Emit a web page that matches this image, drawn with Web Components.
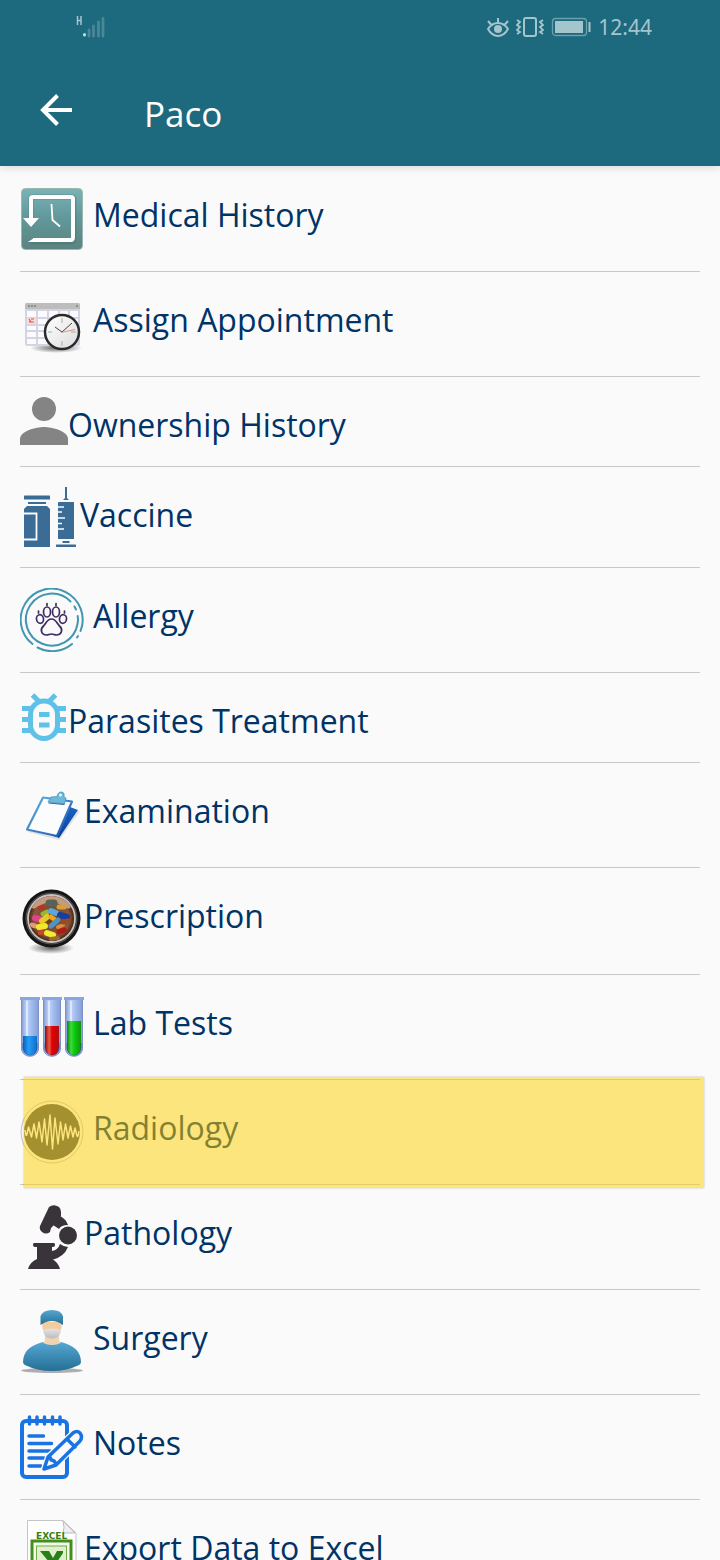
<!DOCTYPE html>
<html lang="en">
<head>
  <meta charset="UTF-8">
  <meta name="viewport" content="width=device-width, initial-scale=1.0">
  <title>Paco</title>
  <style>
    body {
      margin: 0;
      font-family: "Open Sans", "Noto Sans", sans-serif;
      background: #fafafa;
      color: #003366;
    }
  </style>
</head>
<body>

<patient-screen>
  <status-bar slot="top" time="12:44"></status-bar>
  <app-bar slot="top">Paco</app-bar>

  <menu-row spaced>
    <svg slot="icon" width="64" height="64" viewBox="0 0 64 64">
      <defs>
        <linearGradient id="teal" x2="0" y2="1"><stop stop-color="#7ab3b6"/><stop offset=".45" stop-color="#62999c"/><stop offset="1" stop-color="#5a8480"/></linearGradient>
      </defs>
      <rect x="1.500" y="1.500" width="61" height="61" rx="4" fill="url(#teal)" stroke="#9fb5b4"/>
      <path d="M11 33V12q0-2 2-2h39q2 0 2 2v39q0 4-2 4H10" fill="none" stroke="#44706f" stroke-width="5" opacity=".4"/>
      <path d="M11 33V12q0-2 2-2h38q2 0 2 2v38q0 3-2 3H13" fill="none" stroke="#fff" stroke-width="4"/>
      <path d="M3 31h16l-8 9zM14 51l-6 4h8z" fill="#fff"/>
      <path d="M31.500 17l1 16 7.500 6.500" fill="none" stroke="#fff" stroke-width="1.800"/>
    </svg>
    Medical History
  </menu-row>

  <menu-row spaced>
    <svg slot="icon" width="64" height="64" viewBox="0 0 64 64">
      <defs>
        <radialGradient id="soft"><stop stop-color="#000" stop-opacity=".6"/><stop offset="1" stop-color="#000" stop-opacity="0"/></radialGradient>
        <linearGradient id="dial" x2="1" y2="1"><stop stop-color="#fff"/><stop offset="1" stop-color="#dcdcdc"/></linearGradient>
      </defs>
      <ellipse cx="36" cy="56" rx="26" ry="5" fill="url(#soft)"/>
      <rect x="5" y="11" width="55" height="43" rx="2" fill="#d3d5e2"/>
      <path d="M5 17v-4q0-2 2-2h51q2 0 2 2v4z" fill="#bdbdbd"/>
      <path d="M8 14h8M56 14h2" stroke="#8f8f8f" stroke-width="2" stroke-dasharray="2 1"/>
      <path d="M7 19h9v6H7zM18 19h9v6h-9zM29 19h9v6h-9zM40 19h8v6h-8zM50 19h8v6h-8zM7 27h9v5H7zM18 27h9v5h-9zM29 27h9v5h-9zM50 27h8v5h-8zM7 34h9v4H7zM18 34h9v4h-9zM7 40h9v5H7zM18 40h9v5h-9zM7 47h9v5H7zM18 47h9v5h-9z" fill="#fbfbff"/>
      <path d="M7 26h9v6H7z" fill="#fbdada"/>
      <path d="M9 27l2 3m0-3h3m-5 3h5" stroke="#ec4b45" stroke-width="1.200"/>
      <circle cx="42" cy="40" r="17" fill="url(#dial)" stroke="#2b2b2b" stroke-width="2.500"/>
      <path d="M42 26v5M42 49v5M28 40h4M51 40h5" stroke="#aaa"/>
      <path d="M42 40l10-9M42 40l-7-5" stroke="#333" stroke-width=".9"/>
      <path d="M41 40.500l14-3" stroke="#df8a80" stroke-width=".9"/>
    </svg>
    Assign Appointment
  </menu-row>

  <menu-row>
    <svg slot="icon" width="48" height="48" viewBox="0 0 48 48" fill="#848484">
      <circle cx="24" cy="12" r="12"/>
      <path d="M0 48v-6c0-8 16-12 24-12s24 4 24 12v6z"/>
    </svg>
    Ownership History
  </menu-row>

  <menu-row>
    <svg slot="icon" width="60" height="60" viewBox="0 0 60 60">
      <g fill="#3b6c96">
        <rect x="4" y="8.500" width="26" height="4" rx=".5"/>
        <rect x="8" y="15" width="18" height="2"/>
        <path d="M4 60V22l3-3h20l3 3v38z"/>
        <path d="M45 0h2v11l2 2h-6l2-2z"/>
        <rect x="38" y="15" width="16" height="37" rx=".5"/>
        <rect x="42.500" y="54" width="7" height="2"/>
        <rect x="36" y="57.500" width="20" height="2.500" rx=".5"/>
      </g>
      <path d="M4 26.500h12.500v26H4" fill="none" stroke="#fafafa" stroke-width="1.800"/>
      <path d="M38 20h6M38 25h4M38 31h7M38 36.500h4M38 42h6" stroke="#fafafa" stroke-width="1.500"/>
    </svg>
    Vaccine
  </menu-row>

  <menu-row spaced>
    <svg slot="icon" width="64" height="64" viewBox="0 0 64 64" fill="none" stroke-linecap="round">
      <g stroke="#4296b4" stroke-width="2">
        <path d="M60.500 43A31 31 0 1 0 12.500 56M17.500 59.500A31 31 0 0 0 52 56M58 48l-1 1.500"/>
        <path d="M50.500 13.500A26 26 0 1 0 57.500 36M57.500 36q1-4 .2-8M54.500 18.500l1.500 3"/>
      </g>
      <g stroke="#3d2c63" stroke-width="1.700">
        <ellipse cx="20" cy="31" rx="3.500" ry="4.300" transform="rotate(-10 20 31)"/>
        <ellipse cx="27" cy="24" rx="3.500" ry="5"/>
        <ellipse cx="36" cy="24" rx="3.500" ry="5"/>
        <ellipse cx="43" cy="31" rx="3.500" ry="4.300" transform="rotate(10 43 31)"/>
        <path d="M18.500 23v2M27 15.500v2M36 15.500v2M44.500 23v2"/>
        <path d="M31.500 31c5 0 5.500 5 8 7 4 3.500 2 9-3 9-2 0-3-1-5-1s-3 1-5 1c-5 0-7-5.500-3-9 2.500-2 3-7 8-7z"/>
      </g>
    </svg>
    Allergy
  </menu-row>

  <menu-row>
    <svg slot="icon" width="48" height="48" viewBox="0 0 48 48" fill="none" stroke="#5dc1e8" stroke-width="5">
      <rect x="10.500" y="8" width="27" height="37.500" rx="13.500"/>
      <path d="M2 15.500h10M2 26.500h8M2 37.500h10M36 15.500h10M38 26.500h8M36 37.500h10M19 21.500h10.500M19 32h10.500M12.500 2l6.500 6.500M35.500 2L29 8.500"/>
    </svg>
    Parasites Treatment
  </menu-row>

  <menu-row>
    <svg slot="icon" width="64" height="64" viewBox="0 0 64 64">
      <defs>
        <linearGradient id="edge" x2="1" y2="1"><stop stop-color="#5fb6dc"/><stop offset="1" stop-color="#1d4fae"/></linearGradient>
        <linearGradient id="sheet" x2="0" y2="1"><stop stop-color="#1a62c4"/><stop offset="1" stop-color="#0a3f9c"/></linearGradient>
      </defs>
      <path d="M8 48l31 8 20-28" fill="none" stroke="#e2e2e2" stroke-width="2"/>
      <path d="M50 24l8 3-19 28-6-2z" fill="url(#sheet)"/>
      <path d="M23 14.500l29 4-15 34.500-30-6.500z" fill="#fbfcfe" stroke="url(#edge)" stroke-width="2.200" stroke-linejoin="round"/>
      <path d="M28 19l3-5 6-.500q1-5 5-4.500 3 .5 2 5l2 1-1.500 6z" fill="#6db9da" stroke="#3b8dbd" stroke-width=".7"/>
      <circle cx="40.500" cy="12" r="1.500" fill="#e4f4fb"/>
      <path d="M28.500 20l16 1.500" stroke="#246da5"/>
    </svg>
    Examination
  </menu-row>

  <menu-row>
    <svg slot="icon" width="64" height="66" viewBox="0 0 64 66">
      <defs>
        <radialGradient id="jar"><stop stop-color="#6b3518"/><stop offset=".75" stop-color="#8d5a38"/><stop offset="1" stop-color="#3c1d12"/></radialGradient>
        <clipPath id="lens"><circle cx="31.500" cy="30.500" r="22.500"/></clipPath>
      </defs>
      <ellipse cx="31" cy="60" rx="23" ry="6" fill="url(#soft)"/>
      <circle cx="31.500" cy="30.500" r="29" fill="#161616"/>
      <circle cx="31.500" cy="30.500" r="25.500" fill="#333" stroke="#777" stroke-width=".6"/>
      <circle cx="31.500" cy="30.500" r="23.500" fill="url(#jar)" stroke="#c9c3bf" stroke-width="1.800"/>
      <g clip-path="url(#lens)" stroke-linecap="round" fill="none">
        <path d="M14 17q17-12 34 0" stroke="#c49a80" stroke-width="7"/>
        <path d="M29 15h5" stroke="#55635a" stroke-width="7"/>
        <path d="M19 20l4-1" stroke="#b73328" stroke-width="4"/>
        <path d="M39 19h5" stroke="#d0a23e" stroke-width="5"/>
        <path d="M23 26l4-2" stroke="#93b939" stroke-width="5"/>
        <path d="M31 23l5 2" stroke="#5da5dc" stroke-width="6"/>
        <path d="M40 27l7 2" stroke="#173d9d" stroke-width="6"/>
        <path d="M15 30l5 1" stroke="#e2418d" stroke-width="6"/>
        <path d="M22 33l5-4" stroke="#e7c928" stroke-width="6"/>
        <path d="M31 29l3 2" stroke="#e6a61d" stroke-width="5"/>
        <path d="M31 38l7-6" stroke="#4d93c5" stroke-width="5"/>
        <path d="M12 37l3 1" stroke="#e09a76" stroke-width="5"/>
        <path d="M19 39l6-1" stroke="#f2e628" stroke-width="6"/>
        <path d="M38 39l5-2" stroke="#dc8b40" stroke-width="4"/>
        <path d="M43 34l5-1" stroke="#9b4a26" stroke-width="5"/>
        <path d="M20 45l2-1" stroke="#d9402b" stroke-width="4"/>
        <path d="M27 45l6 2" stroke="#f5ea2e" stroke-width="6"/>
        <path d="M39 44l5-2" stroke="#b51716" stroke-width="5"/>
        <path d="M31 51l7-1" stroke="#9c6b39" stroke-width="4"/>
      </g>
    </svg>
    Prescription
  </menu-row>

  <menu-row spaced>
    <svg slot="icon" width="64" height="64" viewBox="0 0 64 64">
      <defs>
        <linearGradient id="glass"><stop stop-color="#829bd3"/><stop offset=".3" stop-color="#c3d5f7"/><stop offset=".6" stop-color="#a0bbee"/><stop offset="1" stop-color="#869dd4"/></linearGradient>
        <linearGradient id="blue"><stop stop-color="#0763b8"/><stop offset=".4" stop-color="#249cf4"/><stop offset="1" stop-color="#0c70cd"/></linearGradient>
        <linearGradient id="red"><stop stop-color="#940808"/><stop offset=".3" stop-color="#e85b4a"/><stop offset=".5" stop-color="#e40000"/><stop offset="1" stop-color="#aa1010"/></linearGradient>
        <linearGradient id="green"><stop stop-color="#078c09"/><stop offset=".3" stop-color="#40da3e"/><stop offset=".5" stop-color="#0bd00b"/><stop offset="1" stop-color="#129312"/></linearGradient>
        <g id="tube">
          <path d="M1.500 4v49c0 11 17 11 17 0V4z" fill="url(#glass)" stroke="#7d91c7"/>
          <path d="M0 2h20v3H0z" fill="#8ba6df"/>
          <path d="M7 6v46" stroke="#dce8ff" stroke-width="2"/>
        </g>
      </defs>
      <use href="#tube"/>
      <use href="#tube" x="22"/>
      <use href="#tube" x="44"/>
      <path d="M3 41h14v11c0 11-14 11-14 0z" fill="url(#blue)"/>
      <path d="M25 31h14v21c0 11-14 11-14 0z" fill="url(#red)"/>
      <path d="M47 26h14v26c0 11-14 11-14 0z" fill="url(#green)"/>
      <g fill="none" stroke="#263b82" opacity=".55">
        <path d="M3 48v4c0 11 14 11 14 0v-4M25 48v4c0 11 14 11 14 0v-4M47 48v4c0 11 14 11 14 0v-4"/>
      </g>
    </svg>
    Lab Tests
  </menu-row>

  <menu-row spaced highlighted>
    <svg slot="icon" width="64" height="64" viewBox="0 0 64 64" fill="none">
      <circle cx="32" cy="32" r="31" stroke="#c3c3c8"/>
      <circle cx="32" cy="32" r="28" fill="#48505f"/>
      <path d="M5 30q1 8 2 4l1.500-7 3 10 2.500-13 2.500 14L19 22l3 20 2.500-23 2.500 26 3-30 2.500 34L35 18l3 26 2.500-22 2.500 18 2.500-16 2.500 14 2.500-12 2.500 11 2-9 2 8q1 2 2-5" stroke="#fafafa" stroke-width="1.500" stroke-linejoin="round"/>
    </svg>
    Radiology
  </menu-row>

  <menu-row>
    <svg slot="icon" width="64" height="64" viewBox="0 0 64 64" fill="#39343a">
      <path d="M29 2q4-3 8-1l2 1q2 2 2 5v4l-7 9-3 3-1 4q-4 3-8 0-3-2-2-6z"/>
      <path d="M40 11q6 3 8 9-7 0-9 4l-6-4 4-7z"/>
      <circle cx="48" cy="30.500" r="9"/>
      <path d="M40 39q4 3 8 3-4 10-16 13v-9q6-1 8-7z"/>
      <path d="M14 38h20q1 0 1 2t-2 2h-1v12q6 3 8 10H8q2-7 9-10V42h-2q-2 0-2-2t1-2z"/>
    </svg>
    Pathology
  </menu-row>

  <menu-row spaced>
    <svg slot="icon" width="64" height="64" viewBox="0 0 64 64">
      <defs>
        <linearGradient id="scrubs" x2="0" y2="1"><stop stop-color="#55a7d3"/><stop offset="1" stop-color="#246f95"/></linearGradient>
        <linearGradient id="mask" x2="0" y2="1"><stop stop-color="#e4e4e4"/><stop offset="1" stop-color="#bcbcbc"/></linearGradient>
      </defs>
      <ellipse cx="32" cy="60.500" rx="31" ry="2.500" fill="#8d8d8d" opacity=".7"/>
      <path d="M23 32Q3 37 3 52q0 2 2 3 12 6 27 6t27-6q2-1 2-3 0-15-20-20-9 5-18 0z" fill="url(#scrubs)"/>
      <path d="M25 25h14v4q0 3 2 4-9 4-18 0 2-1 2-4z" fill="#f0d4b2"/>
      <path d="M22 12h20q0 9-4 13-6 4-12 0-4-4-4-13z" fill="#f3cda0"/>
      <path d="M23 20q9-3 18 0-1 7-6 8-3 1-6 0-5-1-6-8z" fill="url(#mask)"/>
      <path d="M20.500 15V6Q23 0 32 0t11 6v9q-11-8-22.500 0z" fill="url(#scrubs)"/>
    </svg>
    Surgery
  </menu-row>

  <menu-row spaced>
    <svg slot="icon" width="64" height="64" viewBox="0 0 64 64" fill="none" stroke="#1a73e2" stroke-width="4" stroke-linecap="round" stroke-linejoin="round">
      <rect x="2" y="6" width="45" height="56" rx="4"/>
      <path d="M9.500 2v7M17 2v7M24.500 2v7M32.500 2v7M40 2v7" stroke-width="3.500"/>
      <path d="M9 21h14.500M9 28.500h22.500M9 36h21M9 43h15M9 51h12" stroke-width="3.500"/>
      <path d="M24 54l4-12 25-24q4-3 7 0 3 4 0 8L36 50z" fill="#fafafa" stroke="#fafafa" stroke-width="6"/>
      <path d="M24 54l4-12 25-24q4-3 7 0 3 4 0 8L36 50zM28 42q3 0 3 3 4 0 5 5M47 24l8 8" fill="#fafafa" stroke-width="3.500"/>
      <path d="M23 55l2-6 4 4z" fill="#1a73e2" stroke="none"/>
    </svg>
    Notes
  </menu-row>

  <menu-row>
    <svg slot="icon" width="64" height="64" viewBox="0 0 64 64">
      <path d="M7.500.5H43L56 13v50.500H7.500z" fill="#fff" stroke="#c4c4c4"/>
      <path d="M43 1q2 7 0 12h12z" fill="#eee" stroke="#bbb"/>
      <text x="16" y="19" font-family="DejaVu Sans, sans-serif" font-size="9" font-weight="bold" fill="#39820f">EXCEL</text>
      <rect x="12" y="21" width="39" height="40" fill="#f3f9ea" stroke="#448e20" stroke-width="3"/>
      <rect x="16.500" y="26" width="30" height="31" fill="#e0f0cb" stroke="#6fab4a"/>
      <path d="M20 31h9l4 7 4-7h6v2L33 48l-2 6h-9l7-12z" fill="#28801b"/>
    </svg>
    Export Data to Excel
  </menu-row>
</patient-screen>

<script>
  // Attach an open shadow root filled with the given markup
  function render(host, html) {
    const template = document.createElement("template");
    template.innerHTML = html;
    host.attachShadow({ mode: "open" }).appendChild(template.content.cloneNode(true));
  }

  // Screen shell: fixed bars on top, scrolling list below
  class PatientScreen extends HTMLElement {
    constructor() {
      super();
      render(this, `
        <style>
          :host {
            display: flex;
            flex-direction: column;
            height: 100vh;
          }
          header {
            flex: none;
            background: #1d697d;
            box-shadow: 0 2px 8px rgba(0, 0, 0, 0.12);
          }
          nav {
            flex: 1;
            min-height: 0;
            overflow-y: auto;
            scrollbar-width: none;
            padding: 1px 20px 0;
          }
        </style>
        <header><slot name="top"></slot></header>
        <nav><slot></slot></nav>
      `);
    }
  }

  // System status bar with signal, battery and clock
  class StatusBar extends HTMLElement {
    constructor() {
      super();
      render(this, `
        <style>
          :host {
            display: flex;
            align-items: center;
            justify-content: space-between;
            height: 54px;
            padding: 0 68px 0 76px;
            color: #a5c5cd;
            font-family: "Noto Sans", sans-serif;
            font-size: 21px;
            line-height: 24px;
          }
          .right {
            display: flex;
            align-items: center;
            gap: 7px;
          }
          svg { display: block; }
        </style>
        <svg width="30" height="24" viewBox="0 0 30 24" fill="none" stroke-linecap="round">
          <path d="M1.500 1v9M5 1v9M1.500 5.500H5" stroke="#a5c5cd" stroke-width="1.500" stroke-linecap="butt"/>
          <path d="M8.500 19.500v.5" stroke="#c3dade" stroke-width="3"/>
          <path d="M13 15v6M17.500 11v10M22.500 7v14M27 3.500V21" stroke="#4a8797" stroke-width="2.800"/>
        </svg>
        <div class="right">
          <svg width="22" height="24" viewBox="0 0 22 24" fill="none" stroke="#a5c5cd" stroke-width="2">
            <path d="M1 14q4-6 10-6t10 6q-4 7-10 7T1 14zM11 8V3M4.500 10L1 6M17.500 10L21 6"/>
            <circle cx="11" cy="14" r="4" fill="#a5c5cd" stroke="none"/>
          </svg>
          <svg width="28" height="24" viewBox="0 0 28 24" fill="none" stroke="#a5c5cd" stroke-width="2">
            <rect x="8" y="3" width="12" height="18" rx="2"/>
            <path d="M1 5l3 2-3 3 3 2-3 3 3 2-3 2M27 5l-3 2 3 3-3 2 3 3-3 2 3 2" stroke-width="1.800"/>
          </svg>
          <svg width="40" height="24" viewBox="0 0 40 24">
            <rect x="1.500" y="3.500" width="34" height="17" rx="3" fill="none" stroke="#6ba0ad" stroke-width="1.300"/>
            <rect x="4" y="6" width="28" height="12" fill="#a5c5cd"/>
            <path d="M38.500 7v10" stroke="#a5c5cd" stroke-width="2"/>
          </svg>
          <span></span>
        </div>
      `);
    }

    connectedCallback() {
      this.shadowRoot.querySelector("span").textContent = this.getAttribute("time");
    }
  }

  // Title bar with a back button
  class AppBar extends HTMLElement {
    constructor() {
      super();
      render(this, `
        <style>
          :host {
            display: flex;
            align-items: center;
            gap: 64px;
            height: 112px;
            padding: 0 32px;
            box-sizing: border-box;
            color: #fff;
          }
          button {
            width: 48px;
            height: 48px;
            padding: 0;
            border: 0;
            background: none;
          }
          svg { display: block; margin: 0 auto; }
          h1 {
            margin: 0;
            padding-top: 8px;
            font-size: 35px;
            font-weight: 400;
            line-height: 48px;
          }
        </style>
        <button type="button" aria-label="Back">
          <svg width="32" height="32" viewBox="0 0 32 32" fill="none" stroke="#fff" stroke-width="4">
            <path d="M17.500 1.500L3 16l14.500 14.500M3 16h29"/>
          </svg>
        </button>
        <h1><slot></slot></h1>
      `);
    }
  }

  // One entry of the list: icon, label and divider
  class MenuRow extends HTMLElement {
    constructor() {
      super();
      render(this, `
        <style>
          :host {
            display: block;
            position: relative;
            border-bottom: 1px solid #c8c8c8;
          }
          a {
            display: flex;
            align-items: flex-start;
            padding: 20px 0;
            color: inherit;
            text-decoration: none;
          }
          ::slotted(svg) {
            display: block;
            flex: none;
          }
          span {
            padding-top: 7px;
            font-size: 32px;
            line-height: 42px;
            white-space: nowrap;
          }
          :host([spaced]) span { margin-left: 9px; }
          :host([highlighted])::after {
            content: "";
            position: absolute;
            z-index: 1;
            inset: -3px -4px -4px 4px;
            background: rgba(255, 208, 0, 0.5);
            box-shadow: 0 0 2px rgba(60, 60, 90, 0.3);
            pointer-events: none;
          }
        </style>
        <a href="#"><slot name="icon"></slot><span><slot></slot></span></a>
      `);
    }
  }

  customElements.define("patient-screen", PatientScreen);
  customElements.define("status-bar", StatusBar);
  customElements.define("app-bar", AppBar);
  customElements.define("menu-row", MenuRow);
</script>

</body>
</html>
